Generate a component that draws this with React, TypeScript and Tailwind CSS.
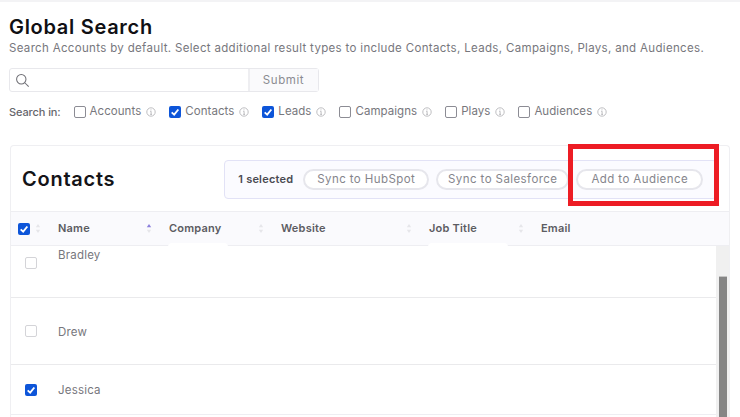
const filters = [
  { label: "Accounts", checked: false },
  { label: "Contacts", checked: true },
  { label: "Leads", checked: true },
  { label: "Campaigns", checked: false },
  { label: "Plays", checked: false },
  { label: "Audiences", checked: false },
];

const columns = [
  { label: "Name", width: "w-[111px]", active: true },
  { label: "Company", width: "w-[112px]", active: false },
  { label: "Website", width: "w-[148px]", active: false },
  { label: "Job Title", width: "w-[112px]", active: false },
  { label: "Email", width: "w-auto", active: false },
];

function Check({ checked, dim }: { checked: boolean; dim?: boolean }) {
  if (checked) {
    return (
      <span className="flex h-[12px] w-[12px] shrink-0 items-center justify-center rounded-[2px] bg-[#0d55d9]">
        <svg viewBox="0 0 12 12" className="h-[10px] w-[10px]" fill="none" stroke="#fff" strokeWidth="2.2">
          <path d="M2 6.5 L5 9.2 L10 3" />
        </svg>
      </span>
    );
  }
  return (
    <span
      className={`block h-[12px] w-[12px] shrink-0 rounded-[2px] border ${dim ? "border-[#d4d4d8]" : "border-[#8c8c94]"} bg-white`}
    />
  );
}

function Info() {
  return (
    <svg viewBox="0 0 10 10" className="ml-[5px] h-[10px] w-[10px] shrink-0" fill="none" stroke="#a3a3a8" strokeWidth="0.7">
      <circle cx="5" cy="5" r="4.2" />
      <path d="M4.2 4.3 H5.1 V7.4 M4.2 7.4 H6" />
      <path d="M5 2.4 V3.3" />
    </svg>
  );
}

function Sort({ active }: { active?: boolean }) {
  return (
    <svg viewBox="0 0 6 12" className="h-[11px] w-[6px] shrink-0">
      <path d="M3 1 L5.4 4.6 H0.6 Z" fill={active ? "#8b7fdc" : "#e6e6ea"} />
      <path d="M3 11 L5.4 7.4 H0.6 Z" fill="#e6e6ea" />
    </svg>
  );
}

function Pill({ children, width }: { children: string; width: string }) {
  return (
    <button
      className={`h-[21px] ${width} rounded-full border-2 border-[#e6e6ec] bg-white text-[11.5px] leading-none tracking-[0.42px] text-[#85858c]`}
    >
      {children}
    </button>
  );
}

export default function App() {
  return (
    <div
      className="relative h-[417px] w-[740px] overflow-hidden bg-white"
      style={{ fontFamily: "Inter, 'Noto Sans', sans-serif" }}
    >
      <div className="h-[2px] bg-[#f3f3f5]" />

      <div className="pl-[9px]">
        <h1 className="mt-[13px] text-[20px] leading-[24px] font-semibold tracking-[0.7px] text-[#101014]">
          Global Search
        </h1>
        <p className="mt-[1px] text-[11.5px] leading-[16px] tracking-[0.33px] whitespace-nowrap text-[#77777d]">
          Search Accounts by default. Select additional result types to include Contacts, Leads, Campaigns, Plays, and
          Audiences.
        </p>

        <div className="mt-[12px] flex h-[24px] w-[310px] rounded-[3px] border border-[#e8e8ec]">
          <div className="flex flex-1 items-center pl-[5px]">
            <svg viewBox="0 0 16 16" className="h-[15px] w-[15px]" fill="none" stroke="#6f6f75" strokeWidth="1.1">
              <circle cx="6.7" cy="6.7" r="5" />
              <path d="M10.4 10.4 L14.6 14.6" />
            </svg>
          </div>
          <button className="w-[70px] border-l-2 border-[#eeeef1] bg-[#fafafc] pt-[2px] pr-[1px] text-[11.5px] tracking-[0.6px] text-[#8b8b91]">
            Submit
          </button>
        </div>

        <div className="mt-[12px] flex h-[16px] items-center text-[11.5px] tracking-[0.05px] text-[#77777d]">
          <span className="mr-[13px] text-[11px] font-medium tracking-[-0.1px] text-[#66666c]">Search in:</span>
          {filters.map((f) => (
            <label key={f.label} className="mr-[13px] flex items-center">
              <Check checked={f.checked} />
              <span className="ml-[4px]">{f.label}</span>
              <Info />
            </label>
          ))}
        </div>
      </div>

      <div className="mt-[25px] ml-[10px] h-[281px] w-[720px] rounded-t-[4px] border-t border-l border-r border-[#efeff2]">
        <div className="flex h-[66px] items-center border-b border-[#eeeef2] pt-[1px] pr-[12px] pl-[11px]">
          <h2 className="text-[20px] font-semibold tracking-[0.75px] text-[#141418]">Contacts</h2>
          <div className="ml-[109px] flex h-[39px] flex-1 items-center gap-[7px] rounded-[4px] border border-[#e2e2f6] bg-[#fbfbff] pt-[1px] pl-[13px]">
            <span className="mr-[3px] text-[11px] font-semibold tracking-[0.2px] whitespace-nowrap text-[#4a4a52]">
              1 selected
            </span>
            <Pill width="w-[126px]">Sync to HubSpot</Pill>
            <Pill width="w-[133px]">Sync to Salesforce</Pill>
            <Pill width="w-[127px]">Add to Audience</Pill>
          </div>
        </div>

        <div className="flex h-[34px] items-center border-b border-[#eeeef2] bg-[#fafafd] pl-[7px]">
          <Check checked />
          <span className="mr-[17px] ml-[5px]">
            <Sort />
          </span>
          {columns.map((c) => (
            <div key={c.label} className={`flex items-center ${c.width}`}>
              <span className="text-[11px] font-semibold tracking-[0.2px] text-[#5c5c62]">{c.label}</span>
              {c.label !== "Email" && (
                <span className="mr-[17px] ml-auto">
                  <Sort active={c.active} />
                </span>
              )}
            </div>
          ))}
        </div>

        <div className="flex h-[180px]">
          <div className="flex-1 overflow-hidden text-[11.5px] tracking-[0.2px] text-[#77777d]">
            <div className="h-[52px] border-b border-[#eaeaec] pl-[14px]">
              <div className="flex pt-[11px]">
                <Check checked={false} dim />
                <span className="-mt-[10px] ml-[21px] leading-[16px]">Bradley</span>
              </div>
            </div>
            <div className="flex h-[67px] items-center border-b border-[#eaeaec] pl-[14px]">
              <Check checked={false} dim />
              <span className="mt-[4px] ml-[21px]">Drew</span>
            </div>
            <div className="flex h-[50px] items-center border-b border-[#eeeef2] pl-[14px]">
              <Check checked />
              <span className="mt-[3px] ml-[21px]">Jessica</span>
            </div>
          </div>
          <div className="w-[13px] shrink-0 bg-[#f0f0f0] pt-[30px] pl-[3px]">
            <div className="h-[150px] w-[8px] border-t border-[#c4c4c4] bg-[#858585]" />
          </div>
        </div>
      </div>

      {/* redaction smudges left over the table header edge */}
      <div className="absolute top-[243px] left-[168px] h-[4px] w-[60px] rounded-t-full bg-white" />
      <div className="absolute top-[243px] left-[428px] h-[4px] w-[80px] rounded-t-full bg-white" />

      {/* red annotation box */}
      <div className="absolute top-[144px] left-[568px] h-[62px] w-[151px] border-[5px] border-[#ed1c24]" />
    </div>
  );
}
